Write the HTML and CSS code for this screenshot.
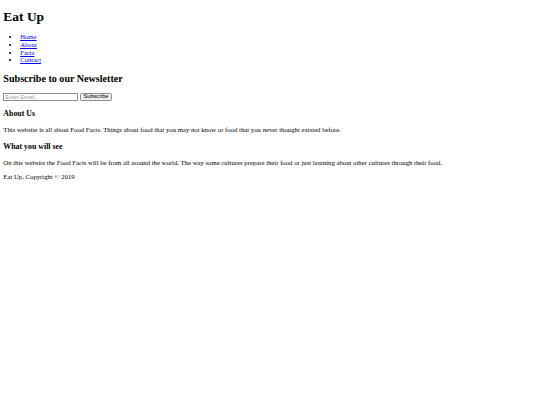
FILE: index.html
```html
<!DOCTYPE html>
<html lang="en">
<head>
<meta charset="utf-8">
<title>Eat Up</title>
<link rel="stylesheet" href="styles.css">
</head>
<body class="site">
<header class="site-header">
<h1 class="site-title">Eat Up</h1>
<nav>
<ul class="nav-list">
<li class="nav-item"><a class="nav-link" href="#">Home</a></li>
<li class="nav-item"><a class="nav-link" href="#">About</a></li>
<li class="nav-item"><a class="nav-link" href="#">Facts</a></li>
<li class="nav-item"><a class="nav-link" href="#">Contact</a></li>
</ul>
</nav>
</header>
<section class="newsletter">
<h2 class="section-title">Subscribe to our Newsletter</h2>
<form class="subscribe-form">
<input class="email-input" type="email" placeholder="Enter Email..."><button class="subscribe-btn" type="button">Subscribe</button>
</form>
</section>
<section class="content">
<h3 class="sub-title">About Us</h3>
<p class="text">This website is all about Food Facts. Things about food that you may not know or food that you never thought existed before.</p>
<h3 class="sub-title sub-title-spaced">What you will see</h3>
<p class="text">On this website the Food Facts will be from all around the world. The way some cultures prepare their food or just learning about other cultures through their food.</p>
</section>
<footer class="site-footer">
<p class="text">Eat Up, Copyright &copy; 2019</p>
</footer>
</body>
</html>
```

FILE: styles.css
```css
.site {
  margin: 3.36px;
  font-family: "Liberation Serif", "Times New Roman", serif;
  font-size: 6.72px;
  color: #000;
  background: #fff;
}
.site-title {
  font-size: 13.44px;
  font-weight: bold;
  margin: 6px 0 8px;
}
.nav-list {
  margin: 6.72px 0;
  padding-left: 16.8px;
  list-style: disc;
}
.nav-item {
  line-height: 7.7px;
}
.nav-link {
  color: #0000ee;
  text-decoration: underline;
}
.section-title {
  font-size: 10.08px;
  font-weight: bold;
  margin: 8.9px 0 8.37px;
}
.subscribe-form {
  display: flex;
  align-items: center;
  gap: 1.7px;
  height: 9px;
}
.email-input {
  box-sizing: border-box;
  width: 75px;
  height: 8.6px;
  margin: 0;
  padding: 0 1px;
  border: 0.84px solid #8f8f8f;
  border-radius: 0;
  font-family: "Liberation Sans", Arial, sans-serif;
  font-size: 5.6px;
  background: #fff;
}
.email-input::placeholder {
  color: #9a9a9a;
}
.subscribe-btn {
  box-sizing: border-box;
  width: 32px;
  height: 8.6px;
  margin: 0;
  padding: 0;
  border: 0.84px solid #8f8f8f;
  border-radius: 1.3px;
  background: #efefef;
  color: #000;
  font-family: "Liberation Sans", Arial, sans-serif;
  font-size: 5.6px;
  line-height: 1;
}
.sub-title {
  font-size: 7.86px;
  font-weight: bold;
  margin: 7.86px 0;
}
.sub-title-spaced {
  margin-top: 8.9px;
}
.text {
  margin: 6.72px 0;
}
```
